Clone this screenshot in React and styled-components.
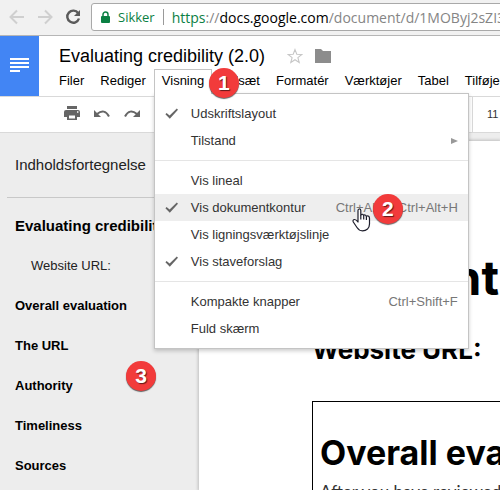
import React from "react";
import styled, { createGlobalStyle } from "styled-components";

const GlobalStyle = createGlobalStyle`
  * { box-sizing: border-box; }
  body {
    margin: 0;
    overflow: hidden;
    background: #fff;
    font-family: "Liberation Sans", Arial, sans-serif;
    font-size: 13px;
    color: #000;
  }
  button {
    font: inherit;
    color: inherit;
    background: none;
    border: 0;
    padding: 0;
    cursor: pointer;
  }
  svg { display: block; flex: none; }
`;

const Shell = styled.div`
  display: flex;
  flex-direction: column;
  height: 100vh;
  overflow: hidden;
`;

const BrowserBar = styled.div`
  flex: none;
  display: flex;
  align-items: center;
  height: 36px;
  padding: 0 0 2px 3px;
  background: #f1f1f1;
  border-bottom: 1px solid #b6b6b6;
`;

const NavButton = styled.button`
  display: grid;
  place-items: center;
  width: 28px;
  height: 28px;
  color: ${(p) => (p.$dim ? "#cfcfcf" : "#5a5a5a")};
`;

const AddressBar = styled.div`
  flex: 1;
  display: flex;
  align-items: center;
  height: 28px;
  margin: 1px -8px 0 4px;
  padding: 0 9px;
  gap: 8px;
  overflow: hidden;
  white-space: nowrap;
  background: #fff;
  border: 1px solid #a9a9a9;
  border-radius: 3px;
  font-family: "Open Sans", "Noto Sans", sans-serif;
  font-size: 13px;
`;

const Secure = styled.span`
  color: #0b8043;
`;

const AddressRule = styled.span`
  flex: none;
  width: 1px;
  height: 16px;
  background: #9a9a9a;
`;

const Url = styled.span`
  flex: none;
  font-size: 14px;
  color: #858585;
`;

const UrlHost = styled.span`
  color: #000;
`;

const Header = styled.header`
  flex: none;
  display: flex;
  height: 61px;
  border-bottom: 1px solid #d9d9d9;
`;

const Logo = styled.a`
  flex: none;
  display: grid;
  place-items: center;
  width: 39px;
  height: 60px;
  padding-bottom: 2px;
  background: #4285f4;
`;

const HeaderMain = styled.div`
  flex: 1;
  min-width: 0;
`;

const TitleRow = styled.div`
  display: flex;
  align-items: center;
  height: 33px;
  padding: 6px 0 0 20px;
`;

const Title = styled.h1`
  margin: 0 22px 0 0;
  font-size: 18px;
  font-weight: 400;
  line-height: 22px;
  white-space: nowrap;
`;

const IconButton = styled.button`
  margin-right: 12px;
`;

const MenuBar = styled.nav`
  display: flex;
  height: 25px;
  padding-left: 12px;
`;

const MenuSlot = styled.div`
  position: relative;
  flex: none;
`;

const MenuButton = styled.button`
  position: relative;
  z-index: ${(p) => (p.$open ? 3 : 0)};
  height: 25px;
  padding: 0 7px 3px;
  border: 1px solid ${(p) => (p.$open ? "#c4c4c4" : "transparent")};
  border-bottom: 0;
  background: ${(p) => (p.$open ? "#fff" : "transparent")};
  white-space: nowrap;
`;

const Dropdown = styled.div`
  position: absolute;
  z-index: 2;
  top: 24px;
  left: 0;
  width: 315px;
  padding: 6px 0;
  background: #fff;
  border: 1px solid #c4c4c4;
  box-shadow: 0 2px 4px rgba(0, 0, 0, 0.2);
`;

const MenuItem = styled.button`
  display: grid;
  grid-template-columns: 36px 1fr auto;
  align-items: center;
  width: 100%;
  height: 27px;
  padding-right: 10px;
  text-align: left;
  white-space: nowrap;
  color: #333;
  background: ${(p) => (p.$active ? "#eee" : "transparent")};
`;

const CheckSlot = styled.span`
  padding-left: 10px;
`;

const Shortcut = styled.span`
  color: #777;
`;

const MenuRule = styled.hr`
  height: 1px;
  margin: 6px 0;
  border: 0;
  background: #e5e5e5;
`;

const Toolbar = styled.div`
  flex: none;
  display: flex;
  align-items: center;
  justify-content: space-between;
  height: 36px;
  padding: 0 0 2px 64px;
  border-bottom: 1px solid #d9d9d9;
  color: #666;
`;

const ToolGroup = styled.div`
  display: flex;
  align-items: center;
  gap: 14px;
`;

const FontSize = styled.button`
  align-self: stretch;
  width: 28px;
  margin-bottom: -2px;
  padding: 0 0 2px 14px;
  border-left: 1px solid #d9d9d9;
  font-size: 11px;
  text-align: left;
  color: #333;
`;

const Workspace = styled.div`
  flex: 1;
  min-height: 0;
  display: grid;
  grid-template-columns: 199px 1fr;
  background: #ededed;
`;

const Outline = styled.aside`
  position: relative;
  padding-left: 7px;
  overflow: hidden;
`;

const OutlineTitle = styled.h2`
  height: 65px;
  margin: 0;
  padding-left: 8px;
  border-bottom: 1px solid #c8c8c8;
  font-size: 15px;
  font-weight: 400;
  line-height: 64px;
  color: #222;
`;

const OutlineList = styled.div`
  display: flex;
  flex-direction: column;
  padding-top: 8px;
`;

const OutlineLink = styled.a`
  padding-left: ${(p) => (p.$nested ? "24px" : "8px")};
  font-size: ${(p) => (p.$main ? "15px" : "13px")};
  font-weight: ${(p) => (p.$nested ? 400 : 700)};
  line-height: 40px;
  white-space: nowrap;
  text-decoration: none;
  color: ${(p) => (p.$nested ? "#222" : "#000")};
`;

const Page = styled.article`
  margin-top: 8px;
  padding-left: 113px;
  overflow: hidden;
  background: #fff;
  box-shadow: 0 0 3px 1px rgba(0, 0, 0, 0.2);
  font-family: Inter, sans-serif;
  white-space: nowrap;
`;

const PageTitle = styled.h1`
  margin: 0;
  padding: 107px 1px 0 0;
  font-size: 48px;
  font-weight: 700;
  line-height: 60px;
  text-align: right;
`;

const PageSubtitle = styled.h2`
  margin: 27px 0 0;
  font-size: 26px;
  font-weight: 700;
  line-height: 30px;
`;

const PageBox = styled.section`
  margin-top: 36px;
  height: 120px;
  padding: 28px 0 0 7px;
  border: 1px solid #000;
  border-right: 0;
`;

const BoxTitle = styled.h2`
  margin: 0;
  font-size: 34px;
  font-weight: 700;
  line-height: 46px;
`;

const BoxText = styled.p`
  margin: 4px 0 0;
  font-family: Lato, sans-serif;
  font-size: 17px;
  line-height: 24px;
  color: #333;
`;

const Badge = styled.span`
  position: absolute;
  z-index: 5;
  left: ${(p) => p.$x}px;
  top: ${(p) => p.$y}px;
  width: 30px;
  height: 30px;
  border-radius: 50%;
  background: #f23b3b;
  box-shadow: 0 1px 1px rgba(0, 0, 0, 0.6);
  font-size: 21px;
  font-weight: 700;
  line-height: 29px;
  text-align: center;
  color: #fff;
  text-shadow: 1px 1px 1px rgba(0, 0, 0, 0.6);
`;

const Pointer = styled.svg`
  position: absolute;
  z-index: 4;
  left: 198px;
  top: 139px;
`;

const Arrow = ({ back }) => (
  <svg width="16" height="16" viewBox="0 0 16 16" fill="none" stroke="currentColor" strokeWidth="2">
    {back ? <path d="M15 8H2M8 1.5L1.5 8L8 14.5" /> : <path d="M1 8H14M8 1.5L14.5 8L8 14.5" />}
  </svg>
);

const Reload = () => (
  <svg width="16" height="16" viewBox="0 0 16 16" fill="none" stroke="currentColor" strokeWidth="2.4">
    <path d="M13.2 4.2A6 6 0 1 0 14 9.5" />
    <path d="M15 1V7H9Z" fill="currentColor" stroke="none" />
  </svg>
);

const Lock = () => (
  <svg width="9" height="13" viewBox="0 0 9 13" fill="#0b8043">
    <rect y="5" width="9" height="7" rx="1" />
    <path d="M2 6V3.5a2.5 2.5 0 0 1 5 0V6" fill="none" stroke="#0b8043" strokeWidth="1.5" />
  </svg>
);

const DocsMark = () => (
  <svg width="19" height="14" viewBox="0 0 19 14" fill="#fff">
    <path d="M0 0h19v2H0zM0 4h19v2H0zM0 8h19v2H0zM0 12h10v2H0z" />
  </svg>
);

const Star = () => (
  <svg width="16" height="16" viewBox="0 0 16 16" fill="none" stroke="#c6c6c6" strokeWidth="1.1">
    <path d="M8 1.6L9.8 6.2L14.8 6.5L10.9 9.6L12.2 14.4L8 11.7L3.8 14.4L5.1 9.6L1.2 6.5L6.2 6.2Z" />
  </svg>
);

const Folder = () => (
  <svg width="16" height="14" viewBox="0 0 16 14" fill="#8c8c8c">
    <path d="M0 0H6L8 2H16V14H0Z" />
  </svg>
);

const Check = () => (
  <svg width="14" height="11" viewBox="0 0 14 11" fill="#666">
    <path d="M1.600 5L4.600 7.600L11.800 0.600L13 1.800L4.800 10.800L0.400 6.300Z" />
  </svg>
);

const Printer = () => (
  <svg width="16" height="15" viewBox="0 0 16 15" fill="currentColor">
    <path d="M3 0h10v3H3z" />
    <path fillRule="evenodd" d="M2 4h12q2 0 2 2v5h-3V8H3v3H0V6q0-2 2-2zM13 5.3v1.4h1.4V5.3z" />
    <path fillRule="evenodd" d="M3 8h10v6H3zM5 9.6v2.8h6V9.6z" />
  </svg>
);

const Undo = ({ flip }) => (
  <svg width="16" height="9" viewBox="0 0 16 9" fill="none" stroke="currentColor" strokeWidth="2">
    <g transform={flip ? "matrix(-1 0 0 1 16 0)" : undefined}>
      <path d="M3 5Q10.500 -1 15 7.500" />
      <path d="M0 1V8H7Z" fill="currentColor" stroke="none" />
    </g>
  </svg>
);

const Triangle = () => (
  <svg width="7" height="6" viewBox="0 0 7 6" fill="#999">
    <path d="M0 0L7 3L0 6Z" />
  </svg>
);

const Hand = () => (
  <Pointer width="19" height="24" viewBox="0 0 19 24" fill="#fff" stroke="#1d1d2b" strokeWidth="1.2" strokeLinejoin="round">
    <path d="M6 14V2.500Q6 1 7.400 1T8.800 2.500V7Q10.200 5.400 11.600 7.300Q13.200 6.200 14.300 8.200Q17.500 7.200 17.500 10.500V16Q17.500 19 15.500 21Q13.500 22.800 10.500 22.800Q7 22.800 5 19.500L1.300 14Q.4 12 2.200 11.500Q4 11.300 6 14Z" />
    <path d="M8.800 7V11.500M11.700 7.500V11.500M14.400 8.300V12" fill="none" />
  </Pointer>
);

const MENUS = ["Filer", "Rediger", "Visning", "Indsæt", "Formatér", "Værktøjer", "Tabel", "Tilføjelser"];

const VIEW_ITEMS = [
  { label: "Udskriftslayout", checked: true },
  { label: "Tilstand", submenu: true },
  null,
  { label: "Vis lineal" },
  { label: "Vis dokumentkontur", checked: true, active: true, keys: "Ctrl+Alt+A Ctrl+Alt+H" },
  { label: "Vis ligningsværktøjslinje" },
  { label: "Vis staveforslag", checked: true },
  null,
  { label: "Kompakte knapper", keys: "Ctrl+Shift+F" },
  { label: "Fuld skærm" },
];

const OUTLINE = [
  { label: "Evaluating credibility", main: true },
  { label: "Website URL:", nested: true },
  { label: "Overall evaluation" },
  { label: "The URL" },
  { label: "Authority" },
  { label: "Timeliness" },
  { label: "Sources" },
];

function ViewMenu() {
  return (
    <>
      <Dropdown role="menu">
        {VIEW_ITEMS.map((item, i) =>
          item ? (
            <MenuItem key={item.label} role="menuitem" $active={item.active}>
              <CheckSlot>{item.checked && <Check />}</CheckSlot>
              <span>{item.label}</span>
              {item.submenu && <Triangle />}
              {item.keys && <Shortcut>{item.keys}</Shortcut>}
            </MenuItem>
          ) : (
            <MenuRule key={i} />
          )
        )}
      </Dropdown>
      <Hand />
      <Badge $x={55} $y={-1}>1</Badge>
      <Badge $x={219} $y={125}>2</Badge>
    </>
  );
}

export default function App() {
  return (
    <Shell>
      <GlobalStyle />
      <BrowserBar>
        <NavButton $dim aria-label="Tilbage"><Arrow back /></NavButton>
        <NavButton $dim aria-label="Frem"><Arrow /></NavButton>
        <NavButton aria-label="Genindlæs"><Reload /></NavButton>
        <AddressBar>
          <Lock />
          <Secure>Sikker</Secure>
          <AddressRule />
          <Url>
            <Secure>https</Secure>://<UrlHost>docs.google.com</UrlHost>/document/d/1MOByj2sZI3b
          </Url>
        </AddressBar>
      </BrowserBar>
      <Header>
        <Logo href="#" aria-label="Docs"><DocsMark /></Logo>
        <HeaderMain>
          <TitleRow>
            <Title>Evaluating credibility (2.0)</Title>
            <IconButton aria-label="Stjerne"><Star /></IconButton>
            <IconButton aria-label="Mappe"><Folder /></IconButton>
          </TitleRow>
          <MenuBar>
            {MENUS.map((name) => (
              <MenuSlot key={name}>
                <MenuButton $open={name === "Visning"}>{name}</MenuButton>
                {name === "Visning" && <ViewMenu />}
              </MenuSlot>
            ))}
          </MenuBar>
        </HeaderMain>
      </Header>
      <Toolbar>
        <ToolGroup>
          <button aria-label="Udskriv"><Printer /></button>
          <button aria-label="Fortryd"><Undo /></button>
          <button aria-label="Gentag"><Undo flip /></button>
        </ToolGroup>
        <FontSize>11</FontSize>
      </Toolbar>
      <Workspace>
        <Outline>
          <OutlineTitle>Indholdsfortegnelse</OutlineTitle>
          <OutlineList>
            {OUTLINE.map((entry) => (
              <OutlineLink key={entry.label} href="#" $main={entry.main} $nested={entry.nested}>
                {entry.label}
              </OutlineLink>
            ))}
          </OutlineList>
          <Badge $x={126} $y={228}>3</Badge>
        </Outline>
        <Page>
          <PageTitle>nt</PageTitle>
          <PageSubtitle>Website URL:</PageSubtitle>
          <PageBox>
            <BoxTitle>Overall evaluation</BoxTitle>
            <BoxText>After you have reviewed</BoxText>
          </PageBox>
        </Page>
      </Workspace>
    </Shell>
  );
}
